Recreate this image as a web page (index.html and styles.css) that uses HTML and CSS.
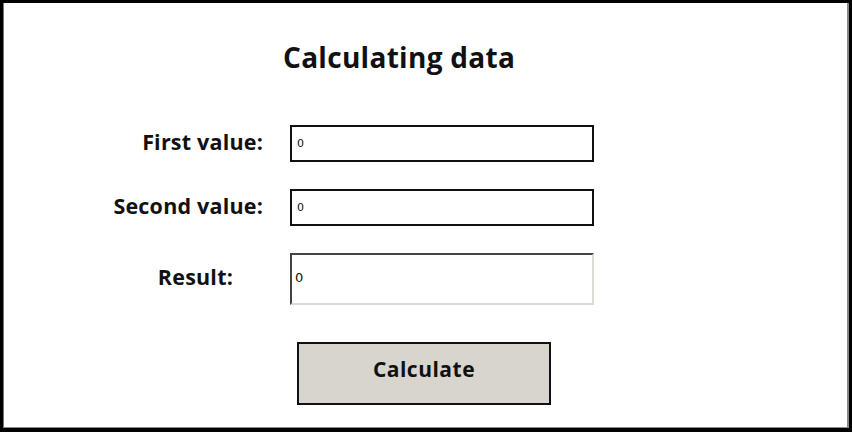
FILE: index.html
```html
<!DOCTYPE html>
<html>
<head>
<meta charset="utf-8">
<link rel="stylesheet" href="styles.css">
</head>
<body>
<div class="frame">
  <h1 class="title">Calculating data</h1>
  <div class="form">
    <label class="label">First value:</label>
    <div class="field">0</div>
    <label class="label">Second value:</label>
    <div class="field">0</div>
    <label class="label label-result">Result:</label>
    <div class="field field-result">0</div>
  </div>
  <div class="actions">
    <button class="btn">Calculate</button>
  </div>
</div>
</body>
</html>
```
FILE: styles.css
```css
html, body {
  margin: 0;
  padding: 0;
  background: #000;
}
.frame {
  box-sizing: border-box;
  width: 852px;
  height: 432px;
  background: #fff;
  border: 3px solid #000;
  border-right-width: 3px;
  border-bottom-width: 4px;
  box-shadow: inset 1px 0 0 #777, inset -2px -1px 0 #888;
  font-family: "Open Sans", Lato, sans-serif;
  color: #111;
}
.title {
  margin: 37px 0 0 0;
  padding-left: 280px;
  font-size: 28px;
  font-weight: 700;
  line-height: 34px;
  letter-spacing: 0.3px;
}
.form {
  display: grid;
  grid-template-columns: 260px 304px;
  column-gap: 27px;
  row-gap: 27px;
  margin-top: 51px;
  align-items: center;
}
.label {
  text-align: right;
  font-size: 21.5px;
  font-weight: 700;
  letter-spacing: 0.2px;
  line-height: 26px;
  padding-bottom: 4px;
}
.label-result {
  padding-right: 30px;
}
.field {
  box-sizing: border-box;
  height: 37px;
  border: 2px solid #111;
  font-family: "DejaVu Sans", sans-serif;
  font-size: 11px;
  line-height: 33px;
  padding-left: 5px;
}
.field-result {
  height: 52px;
  border-top: 2px solid #444;
  border-left: 2px solid #444;
  border-right: 2px solid #ddd9d3;
  border-bottom: 2px solid #ddd9d3;
  line-height: 46px;
  font-size: 13px;
  padding-left: 3px;
}
.actions {
  margin-top: 37px;
  padding-left: 294px;
}
.btn {
  box-sizing: border-box;
  width: 254px;
  height: 63px;
  background: #d8d4ce;
  border: 2px solid #111;
  font-family: "Open Sans", Lato, sans-serif;
  font-size: 21px;
  font-weight: 700;
  letter-spacing: 0.5px;
  color: #111;
  padding: 0 0 10px 0;
}
```
